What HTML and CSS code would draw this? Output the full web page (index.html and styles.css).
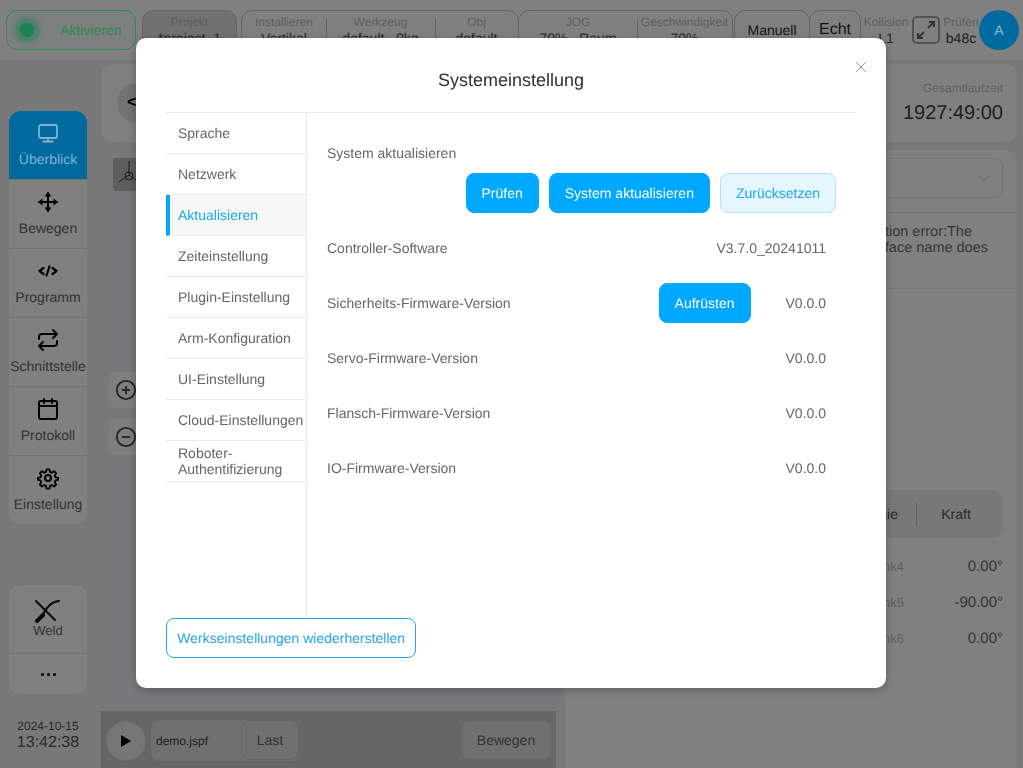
FILE: index.html
```html
<!DOCTYPE html>
<html lang="de">
<head>
<meta charset="utf-8">
<title>Systemeinstellung</title>
<link rel="stylesheet" href="styles.css">
</head>
<body>
<div class="app">
  <header class="topbar">
    <div class="activate"><span class="lamp"></span><span>Aktivieren</span></div>
    <div class="hbox project"><div class="cell"><span class="lbl">Projekt</span><span class="val">*project_1</span></div></div>
    <div class="hbox group1">
      <div class="cell c-inst"><span class="lbl">Installieren</span><span class="val">Vertikal</span></div>
      <div class="cell c-tool"><span class="lbl">Werkzeug</span><span class="val">default &nbsp; 0kg</span></div>
      <div class="cell c-obj"><span class="lbl">Obj</span><span class="val">default</span></div>
    </div>
    <div class="hbox group2">
      <div class="cell c-jog"><span class="lbl">JOG</span><span class="val">70% &nbsp; Raum</span></div>
      <div class="cell c-speed"><span class="lbl">Geschwindigkeit</span><span class="val">70%</span></div>
    </div>
    <div class="hbox mode manuell">Manuell</div>
    <div class="hbox mode echt">Echt</div>
    <div class="cell plain c-koll"><span class="lbl">Kollision</span><span class="val">L1</span></div>
    <svg class="fs" viewBox="0 0 28 28" fill="none" stroke="#535353" stroke-width="2"><rect x="1" y="1" width="26" height="26" rx="4"/><path d="M16 12 22 6M17 6h5v5" stroke="#363636"/><path d="M12 16l-6 6M6 17v5h5" stroke="#363636"/></svg>
    <div class="cell plain c-check"><span class="lbl">Prüfen</span><span class="val">b48c</span></div>
    <div class="avatar">A</div>
  </header>
  <div class="body">
    <aside class="side">
      <nav class="card nav">
        <div class="nav-item active"><svg viewBox="0 0 24 24" class="ic"><rect x="3" y="4" width="18" height="13" rx="2"/><path d="M12 17v3M7 20.500h10"/></svg><span>Überblick</span></div>
        <div class="nav-item"><svg viewBox="0 0 24 24" class="ic"><path d="M12 3v18M3 12h18"/><path d="M8.500 6.500 12 2l3.500 4.500zM8.500 17.500 12 22l3.500-4.500zM6.500 8.500 2 12l4.500 3.500zM17.500 8.500 22 12l-4.500 3.500z" fill="#000" stroke="none"/></svg><span>Bewegen</span></div>
        <div class="nav-item"><svg viewBox="0 0 24 24" class="ic code"><path d="M7.500 9 3.500 12l4 3M16.500 9l4 3-4 3M13.500 7.500l-3 9"/></svg><span>Programm</span></div>
        <div class="nav-item"><svg viewBox="0 0 24 24" class="ic"><path d="M17 2l4 4-4 4M3 11V9a3 3 0 0 1 3-3h15M7 22l-4-4 4-4M21 13v2a3 3 0 0 1-3 3H3"/></svg><span>Schnittstelle</span></div>
        <div class="nav-item"><svg viewBox="0 0 24 24" class="ic"><rect x="3" y="4" width="18" height="18" rx="2"/><path d="M3 9h18M8 2v4M16 2v4"/></svg><span>Protokoll</span></div>
        <div class="nav-item"><svg viewBox="0 0 24 24" class="ic"><circle cx="12" cy="12" r="3"/><path d="M10.300 2h3.400l.6 3 2.100.9 2.600-1.700 2.400 2.400-1.700 2.600.9 2.100 3 .6v2.200l-3 .6-.9 2.100 1.700 2.600-2.400 2.400-2.600-1.700-2.100.9-.6 3h-3.400l-.6-3-2.100-.9-2.600 1.700-2.400-2.400 1.700-2.600-.9-2.100-3-.6v-2.200l3-.6.9-2.100-1.700-2.600 2.400-2.400 2.600 1.700 2.100-.9z" transform="translate(1.500 1.500) scale(.875)"/></svg><span>Einstellung</span></div>
      </nav>
      <div class="card weld">
        <div class="weld-top">
          <svg class="weld-ic" viewBox="0 0 28 24" fill="none" stroke="#0a0a0a" stroke-width="2" stroke-linecap="round"><path d="M2 2 21 21"/><path d="M3 22 9 16" stroke-width="4"/><path d="M9 15C13 8 17 3 25 2" stroke-width="2.200"/></svg>
          <span>Weld</span>
        </div>
        <div class="weld-more"><i></i><i></i><i></i></div>
      </div>
      <div class="clock"><span class="date">2024-10-15</span><span class="time">13:42:38</span></div>
    </aside>
    <main class="main">
      <section class="card runtime">
        <div class="back">&lt;</div>
        <div class="total"><span class="total-lbl">Gesamtlaufzeit</span><span class="total-val">1927:49:00</span></div>
      </section>
      <div class="columns">
        <div class="left">
          <div class="canvas">
            <div class="axis"><svg viewBox="0 0 32 32" fill="none" stroke="#1c1c1c" stroke-width="1"><path d="M16 3v14M16 17 6 24M16 17l10 7"/><circle cx="16" cy="18" r="4"/></svg></div>
            <div class="zoom-btn plus"><svg viewBox="0 0 24 24" fill="none" stroke="#262626" stroke-width="2"><circle cx="12" cy="12" r="10"/><path d="M7.500 12h9M12 7.500v9"/></svg></div>
            <div class="zoom-btn"><svg viewBox="0 0 24 24" fill="none" stroke="#262626" stroke-width="2"><circle cx="12" cy="12" r="10"/><path d="M7.500 12h9"/></svg></div>
          </div>
          <div class="runbar">
            <div class="play"><svg viewBox="0 0 12 14"><path d="M1 1v12l10-6z" fill="#000"/></svg></div>
            <div class="file"><span class="fname">demo.jspf</span><span class="last">Last</span></div>
            <div class="movebtn">Bewegen</div>
          </div>
        </div>
        <div class="right">
          <div class="select-row"><div class="select"><svg viewBox="0 0 12 8" fill="none" stroke="#5c5c5c" stroke-width="1"><path d="M1 1.500 6 6.500l5-5"/></svg></div></div>
          <div class="error"><div class="e1">Communication error:The</div><div class="e2">interface name does</div></div>
          <div class="tabs"><span class="tab-a">Energie</span><span class="tab-sep"></span><span class="tab-b">Kraft</span></div>
          <div class="jrow"><span class="jname">Link4</span><span class="jval">0.00°</span></div>
          <div class="jrow"><span class="jname">Link5</span><span class="jval">-90.00°</span></div>
          <div class="jrow"><span class="jname">Link6</span><span class="jval">0.00°</span></div>
        </div>
      </div>
    </main>
  </div>
</div>
<div class="modal">
  <h1 class="m-title">Systemeinstellung</h1>
  <svg class="m-close" viewBox="0 0 12 12" fill="none" stroke="#999" stroke-width="1"><path d="M1 1l10 10M11 1 1 11"/></svg>
  <div class="m-body">
    <ul class="m-nav">
      <li>Sprache</li>
      <li>Netzwerk</li>
      <li class="on">Aktualisieren</li>
      <li>Zeiteinstellung</li>
      <li>Plugin-Einstellung</li>
      <li>Arm-Konfiguration</li>
      <li>UI-Einstellung</li>
      <li>Cloud-Einstellungen</li>
      <li class="two">Roboter-Authentifizierung</li>
    </ul>
    <div class="m-content">
      <div class="sys-lbl">System aktualisieren</div>
      <div class="sys-btns">
        <button class="btn">Prüfen</button>
        <button class="btn">System aktualisieren</button>
        <button class="btn light">Zurücksetzen</button>
      </div>
      <div class="row"><span class="r-name">Controller-Software</span><span class="r-val">V3.7.0_20241011</span></div>
      <div class="row"><span class="r-name">Sicherheits-Firmware-Version</span><button class="btn up">Aufrüsten</button><span class="r-val">V0.0.0</span></div>
      <div class="row"><span class="r-name">Servo-Firmware-Version</span><span class="r-val">V0.0.0</span></div>
      <div class="row"><span class="r-name">Flansch-Firmware-Version</span><span class="r-val">V0.0.0</span></div>
      <div class="row"><span class="r-name">IO-Firmware-Version</span><span class="r-val">V0.0.0</span></div>
    </div>
  </div>
  <button class="reset">Werkseinstellungen wiederherstellen</button>
</div>
</body>
</html>
```
FILE: styles.css
```css
* { box-sizing: border-box; }
html, body { margin: 0; height: 100%; overflow: hidden; }
body { font-family: "Liberation Sans", Arial, sans-serif; background: #757575; color: #333; font-size: 14px; text-rendering: geometricPrecision; }
.app { width: 1023px; height: 768px; display: flex; flex-direction: column; }
.topbar { height: 60px; flex: none; background: #808080; display: flex; align-items: flex-start; padding-top: 10px; padding-left: 6px; }
.activate { width: 130px; height: 40px; border: 1px solid #2e8a5c; border-radius: 11px; display: flex; align-items: center; background: #7d807f; color: #2d8755; font-size: 14px; padding-left: 7px; gap: 20px; }
.lamp { width: 14px; height: 14px; margin: 6px; border-radius: 50%; background: #1a8253; box-shadow: 0 0 5px 6px rgba(26,130,83,.5); flex: none; }
.hbox { height: 40px; border: 1px solid #656565; border-radius: 11px; display: flex; background: #808080; overflow: hidden; }
.project { width: 95px; margin-left: 6px; background: #717171; }
.group1 { width: 278px; margin-left: 4px; }
.group2 { width: 215px; margin-left: -1px; }
.cell { display: flex; flex-direction: column; align-items: center; white-space: nowrap; flex: none; width: 100%; padding-top: 4px; }
.lbl { font-size: 12px; line-height: 15px; color: #5e5e5e; }
.val { font-size: 14px; line-height: 16px; color: #262626; }
.c-inst { width: 84px; }
.c-tool { width: 109px; }
.c-obj { width: 83px; }
.c-jog { width: 118px; }
.c-speed { width: 95px; }
.c-tool, .c-obj, .c-speed { position: relative; }
.c-tool::before, .c-obj::before, .c-speed::before { content: ""; position: absolute; left: 0; top: 8px; height: 24px; border-left: 1px solid #636363; }
.mode { align-items: center; justify-content: center; color: #141414; }
.manuell { width: 76px; font-size: 14px; margin-left: 1px; }
.echt { width: 52px; font-size: 16px; margin-left: -1px; }
.plain { padding-top: 5px; }
.c-koll { width: 44px; margin-left: 3px; }
.fs { width: 28px; height: 28px; margin: 6px 3px 0 4px; flex: none; }
.c-check { width: 36px; }
.c-check .val { font-size: 14px; color: #1f1f1f; }
.avatar { width: 40px; height: 40px; border-radius: 50%; background: #006a9f; color: #8cbbd4; font-size: 14px; display: flex; align-items: center; justify-content: center; flex: none; }
.body { flex: 1; display: flex; min-height: 0; }
.side { width: 95px; flex: none; padding: 51px 8px 0 9px; display: flex; flex-direction: column; background: #787878; }
.card { background: #808080; border-radius: 12px; }
.nav { height: 413px; flex: none; overflow: hidden; }
.nav-item { height: 69px; display: flex; flex-direction: column; align-items: center; padding-top: 10px; border-bottom: 1px solid #747474; color: #333; font-size: 14px; white-space: nowrap; }
.nav-item:last-child { border-bottom: 0; }
.nav-item span { margin-top: 6px; line-height: 16px; }
.nav-item.active { background: #006a9f; color: #7fb2cf; }
.ic { width: 24px; height: 24px; fill: none; stroke: #000; stroke-width: 2; stroke-linecap: round; stroke-linejoin: round; flex: none; }
.ic.code { stroke-width: 2.200; }
.active .ic { stroke: #7fb2cf; stroke-width: 1.800; }
.weld { margin-top: 61px; height: 109px; flex: none; }
.weld-top { height: 69px; display: flex; flex-direction: column; align-items: center; padding-top: 14px; border-bottom: 1px solid #747474; font-size: 13px; color: #333; line-height: 14px; }
.weld-top span { margin-top: 1px; }
.weld-ic { width: 28px; height: 24px; }
.weld-more { height: 40px; display: flex; align-items: center; justify-content: center; gap: 3px; }
.weld-more i { width: 3px; height: 3px; border-radius: 50%; background: #000; }
.clock { margin-top: 25px; display: flex; flex-direction: column; align-items: center; color: #292929; white-space: nowrap; }
.date { font-size: 12px; line-height: 15px; }
.time { font-size: 16px; line-height: 17px; }
.main { flex: 1; min-width: 0; display: flex; flex-direction: column; padding: 4px 6px 0 6px; background: #787878; }
.runtime { height: 78px; flex: none; display: flex; align-items: center; justify-content: space-between; padding: 0 14px 0 16px; }
.back { width: 40px; height: 40px; border-radius: 50%; background: #737373; font-weight: bold; color: #000; font-size: 16px; display: flex; align-items: center; padding-left: 10px; }
.total { display: flex; flex-direction: column; align-items: flex-end; }
.total-lbl { font-size: 12px; line-height: 15px; color: #606060; }
.total-val { font-size: 20px; line-height: 24px; margin-top: 5px; color: #1f1f1f; }
.columns { flex: 1; display: flex; gap: 9px; margin-top: 8px; min-height: 0; }
.left { width: 455px; flex: none; display: flex; flex-direction: column; }
.canvas { flex: 1; background: #76787a; border-radius: 12px 12px 0 0; padding: 8px 0 0 12px; display: flex; flex-direction: column; align-items: flex-start; }
.axis { width: 32px; height: 33px; background: #5e5e5e; border-radius: 3px; }
.axis svg { width: 32px; height: 32px; display: block; }
.zoom-btn { width: 34px; height: 36px; background: #7e7e7e; border-radius: 6px; margin-left: -4px; margin-top: 11px; display: flex; align-items: center; justify-content: center; }
.zoom-btn svg { width: 22px; height: 22px; }
.plus { margin-top: 181px; }
.runbar { height: 57px; flex: none; background: #666; display: flex; align-items: flex-start; padding: 9px 5px 0 5px; }
.play { width: 40px; height: 40px; margin-top: 1px; border-radius: 50%; background: #767676; border: 1px solid #707070; display: flex; align-items: center; justify-content: center; flex: none; }
.play svg { width: 12px; height: 14px; }
.file { width: 148px; height: 41px; margin-left: 5px; background: #707070; border-radius: 8px; display: flex; align-items: center; justify-content: space-between; padding-left: 5px; }
.fname { font-size: 12px; color: #1f1f1f; }
.last { width: 58px; height: 40px; align-self: flex-start; border: 1px solid #666; border-radius: 9px; display: flex; align-items: center; justify-content: center; color: #333; font-size: 14px; }
.movebtn { width: 90px; height: 38px; margin: 1px 0 0 auto; background: #707070; border: 1px solid #6b6b6b; border-radius: 7px; font-size: 14px; color: #333; display: flex; align-items: center; justify-content: center; }
.right { flex: 1; background: #808080; border-radius: 12px 12px 0 0; display: flex; flex-direction: column; padding: 8px 14px 0 14px; min-width: 0; }
.select-row { height: 55px; border-bottom: 1px solid #777; margin: 0 -14px; padding: 0 14px; flex: none; }
.select { height: 40px; border: 1px solid #777; border-radius: 8px; display: flex; align-items: center; justify-content: flex-end; padding-right: 12px; }
.select svg { width: 12px; height: 8px; }
.error { height: 76px; flex: none; margin: 0 -14px; padding: 11px 14px 0 0; border-bottom: 1px solid #777; font-size: 14.500px; line-height: 16px; color: #363636; display: flex; flex-direction: column; align-items: flex-end; white-space: nowrap; }
.e1 { margin-right: 31px; }
.e2 { margin-right: 15px; }
.tabs { margin-top: 201px; height: 48px; background: #787878; border-radius: 11px; display: flex; align-items: center; flex: none; font-size: 14px; color: #292929; }
.tab-a { flex: 1; text-align: right; padding-right: 18px; }
.tab-sep { height: 24px; border-left: 1px solid #656565; }
.tab-b { width: 86px; text-align: center; padding-right: 8px; }
.jrow { height: 36px; display: flex; justify-content: flex-end; align-items: center; flex: none; }
.tabs + .jrow { margin-top: 10px; }
.jname { color: #5e5e5e; font-size: 13px; margin-right: auto; padding-left: 294px; }
.jval { color: #333; font-size: 15px; }
.modal { position: fixed; left: 136px; top: 38px; width: 750px; height: 650px; background: #fff; border-radius: 10px; box-shadow: 0 2px 8px rgba(0,0,0,.25); padding: 0 30px; display: flex; flex-direction: column; }
.m-title { margin: 0; height: 75px; border-bottom: 1px solid #ebebeb; font-weight: normal; font-size: 18px; color: #303133; text-align: center; line-height: 84px; flex: none; }
.m-close { position: absolute; right: 19px; top: 23px; width: 12px; height: 12px; }
.m-body { display: flex; height: 505px; flex: none; }
.m-nav { list-style: none; margin: 0; padding: 0; width: 141px; flex: none; border-right: 1px solid #ebebeb; }
.m-nav li { height: 41px; border-bottom: 1px solid #ebebeb; padding-left: 12px; display: flex; align-items: center; color: #666; font-size: 14px; white-space: nowrap; }
.m-nav li.on { color: #1aa8f0; background: #f7f7f7; border-left: 4px solid #00a8ff; padding-left: 8px; }
.m-nav li.two { white-space: normal; line-height: 16px; width: 140px; padding-right: 20px; }
.m-content { flex: 1; padding: 20px 20px 0 20px; color: #666; min-width: 0; }
.sys-lbl { height: 40px; line-height: 40px; }
.sys-btns { display: flex; justify-content: flex-end; gap: 10px; height: 40px; margin-bottom: 7px; }
.btn { height: 40px; padding: 0 15px; border: 1px solid #00a8ff; background: #00a8ff; color: #fff; border-radius: 8px; font: 14px "Liberation Sans", Arial, sans-serif; text-rendering: geometricPrecision; }
.btn.light { background: #e6f6ff; color: #1aa8f0; border-color: #b3e2ff; }
.row { height: 55px; display: flex; align-items: center; padding-right: 10px; }
.r-name { margin-right: auto; }
.up { margin-right: 35px; }
.reset { position: absolute; left: 30px; top: 580px; width: 250px; height: 40px; background: #fff; border: 1px solid #2aa6e4; border-radius: 8px; color: #2aa6e4; font: 14px "Liberation Sans", Arial, sans-serif; text-rendering: geometricPrecision; padding: 0; }
```
